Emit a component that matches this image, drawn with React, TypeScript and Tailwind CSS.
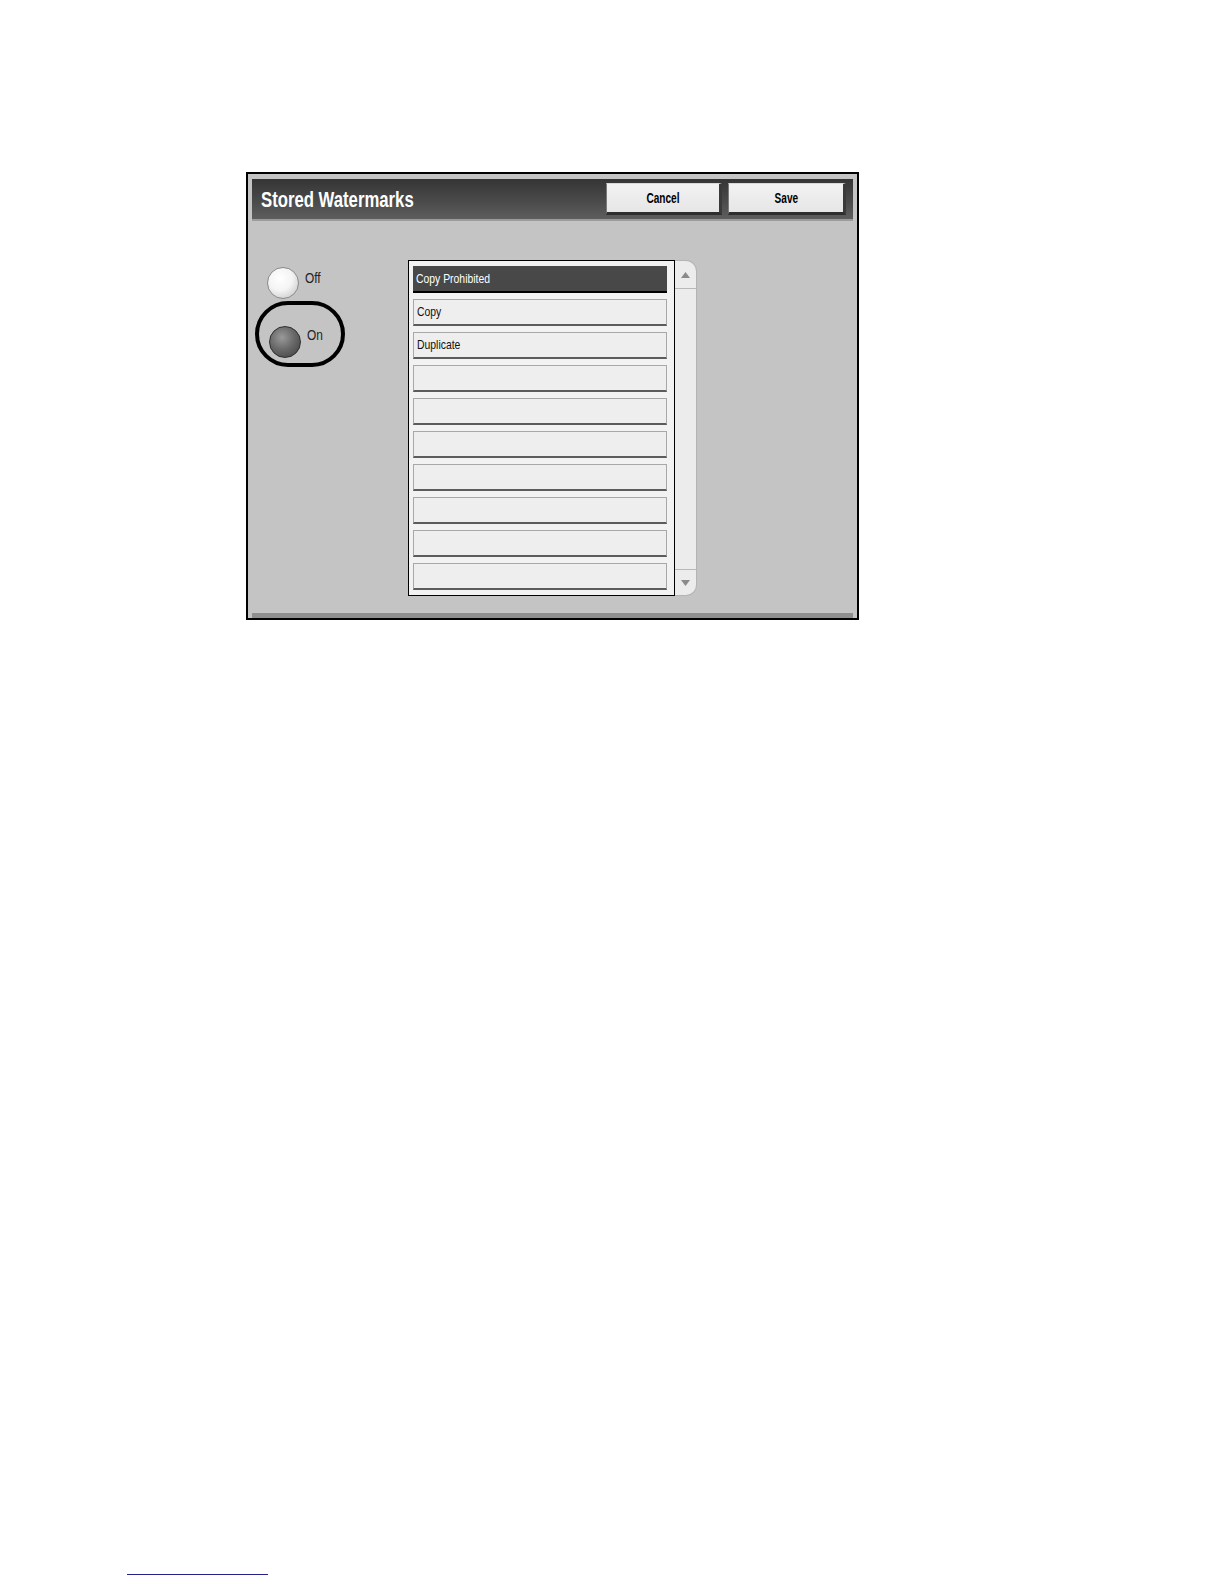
const sans = "font-['Liberation_Sans','Arial',sans-serif]";

const items = ["Copy Prohibited", "Copy", "Duplicate", "", "", "", "", "", "", ""];

function Radio({ on }: { on?: boolean }) {
  return (
    <div
      className={
        on
          ? "w-[32px] h-[32px] rounded-full border border-[#2e2e2e] bg-[radial-gradient(circle_at_40%_35%,#9a9a9a_0%,#6a6a6a_45%,#3c3c3c_100%)]"
          : "w-[32px] h-[32px] rounded-full border border-[#8a8a8a] bg-[radial-gradient(circle_at_40%_35%,#ffffff_0%,#f4f4f4_45%,#bdbdbd_100%)]"
      }
    />
  );
}

function Arrow({ down }: { down?: boolean }) {
  return (
    <svg width="9" height="6" viewBox="0 0 9 6">
      <polygon points={down ? "0,0 9,0 4.5,6" : "0,6 9,6 4.5,0"} fill="#8a8a8a" />
    </svg>
  );
}

export default function App() {
  return (
    <div className={`${sans} min-h-[1584px] bg-white pt-[172px]`}>
      <div className="ml-[246px] w-[613px] h-[448px] border-2 border-black bg-[#c4c4c4] flex flex-col">
        {/* header */}
        <div className="mx-[4px] mt-[5px] h-[42px] bg-[linear-gradient(#353535,#4c4c4c_60%,#5e5e5e)] border-b-2 border-[#9c9c9c] flex items-center">
          <span className="inline-block origin-left scale-x-[0.76] ml-[9px] whitespace-nowrap text-white font-bold text-[22px]">
            Stored Watermarks
          </span>
          <div className="ml-auto flex gap-[6px] pr-[7px]">
            {["Cancel", "Save"].map((b, i) => (
              <button
                key={b}
                className={`${i === 0 ? "w-[116px]" : "w-[118px]"} h-[32px] bg-[linear-gradient(#f2f2f2,#e6e6e6)] border border-[#6a6a6a] border-t-[#d8d8d8] border-l-[#7a7a7a] border-b-[3px] border-r-[3px] border-b-[#2e2e2e] border-r-[#3a3a3a] flex items-center justify-center`}
              >
                <span className="inline-block scale-x-[0.72] text-black font-bold text-[14px]">{b}</span>
              </button>
            ))}
          </div>
        </div>

        {/* body */}
        <div className="flex-1 flex pt-[39px] pl-[4px]">
          <div className="w-[156px] pt-[7px] flex flex-col">
            <div className="flex items-start pl-[15px]">
              <Radio />
              <span className="inline-block origin-left scale-x-[0.85] text-[14px] text-[#222] ml-[6px] mt-[1px]">Off</span>
            </div>
            <div className="mt-[2px] ml-[3px] w-[90px] h-[66px] border-[4px] border-black rounded-[33px] flex items-start pl-[10px] pt-[21px]">
              <Radio on />
              <span className="inline-block origin-left scale-x-[0.85] text-[14px] text-[#222] ml-[6px] -mt-[1px]">On</span>
            </div>
          </div>

          <div className="flex">
            <div className="w-[267px] h-[336px] border border-black bg-[#f2f2f2] pl-[4px] pr-[7px] pt-[5px] flex flex-col gap-[6px]">
              {items.map((t, i) =>
                i === 0 ? (
                  <div key={i} className="h-[27px] bg-[#484848] border-b-2 border-black pl-[3px] flex items-center">
                    <span className="inline-block origin-left scale-x-[0.8] whitespace-nowrap text-white text-[13px]">{t}</span>
                  </div>
                ) : (
                  <div
                    key={i}
                    className="h-[27px] bg-[#eeeeee] border border-[#a8a8a8] border-b-2 border-b-[#5c5c5c] pl-[3px] flex items-center"
                  >
                    <span className="inline-block origin-left scale-x-[0.8] whitespace-nowrap text-[#111] text-[13px]">{t}</span>
                  </div>
                )
              )}
            </div>
            <div className="w-[22px] h-[336px] bg-[#ececec] border border-l-0 border-[#b4b4b4] rounded-r-[11px] flex flex-col">
              <div className="h-[28px] border-b border-[#b8b8b8] flex items-center justify-center">
                <Arrow />
              </div>
              <div className="flex-1" />
              <div className="h-[26px] border-t border-[#b8b8b8] flex items-center justify-center">
                <Arrow down />
              </div>
            </div>
          </div>
        </div>
        <div className="mx-[4px] h-[5px] bg-[#8e8e8e]" />
      </div>

      <div className="mt-[954px] ml-[127px] w-[141px] h-px bg-[#22228a]" />
    </div>
  );
}
